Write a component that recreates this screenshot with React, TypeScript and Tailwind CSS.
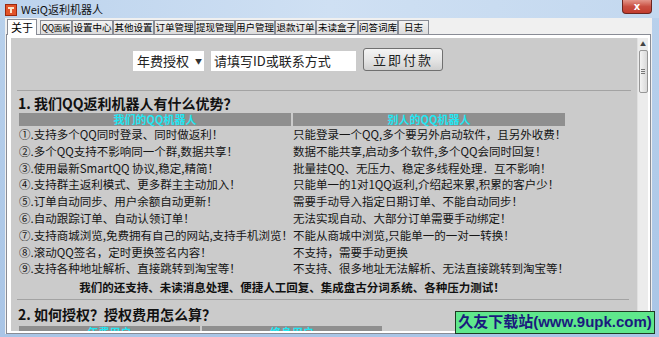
import React from "react";

const TABS = [
  { label: "关于", w: 30 },
  { label: "QQ面板", w: 32 },
  { label: "设置中心", w: 41 },
  { label: "其他设置", w: 41 },
  { label: "订单管理", w: 41 },
  { label: "提现管理", w: 40 },
  { label: "用户管理", w: 40 },
  { label: "退款订单", w: 41 },
  { label: "未读盒子", w: 42 },
  { label: "问答词库", w: 40 },
  { label: "日志", w: 31 },
];

const ROWS: [string, string][] = [
  ["①.支持多个QQ同时登录、同时做返利！", "只能登录一个QQ,多个要另外启动软件，且另外收费！"],
  ["②.多个QQ支持不影响同一个群,数据共享！", "数据不能共享,启动多个软件,多个QQ会同时回复！"],
  ["③.使用最新SmartQQ 协议,稳定,精简！", "批量挂QQ、无压力、稳定多线程处理．互不影响！"],
  ["④.支持群主返利模式、更多群主主动加入！", "只能单一的1对1QQ返利,介绍起来累,积累的客户少！"],
  ["⑤.订单自动同步、用户余额自动更新！", "需要手动导入指定日期订单、不能自动同步！"],
  ["⑥.自动跟踪订单、自动认领订单！", "无法实现自动、大部分订单需要手动绑定！"],
  ["⑦.支持商城浏览,免费拥有自己的网站,支持手机浏览！", "不能从商城中浏览,只能单一的一对一转换！"],
  ["⑧.滚动QQ签名，定时更换签名内容！", "不支持，需要手动更换"],
  ["⑨.支持各种地址解析、直接跳转到淘宝等！", "不支持、很多地址无法解析、无法直接跳转到淘宝等！"],
];

function AppIcon() {
  return (
    <svg width="12" height="12" viewBox="0 0 12 12">
      <rect x="0.5" y="0.5" width="11" height="11" fill="#e2542a" stroke="#9c2a10" />
      <path d="M3 3h6v2H7v4H5V5H3z" fill="#fbe3c8" />
    </svg>
  );
}

export default function App() {
  return (
    <div className="relative w-[659px] h-[337px] overflow-hidden bg-gradient-to-b from-[#b9d1ec] to-[#a9c5e6] font-['Noto_Sans_CJK_SC',sans-serif] text-black">
      {/* Title bar */}
      <div className="h-[18px] flex items-center bg-gradient-to-r from-[#bcd3ed] via-[#cfe0f3] to-[#c3d8ef]">
        <div className="ml-[5px] mt-[2px]">
          <AppIcon />
        </div>
        <span className="ml-[4px] text-[11px] leading-[18px] text-[#111]">WeiQ返利机器人</span>
        <div className="ml-auto mr-[7px] self-start w-[30px] h-[14px] rounded-b-[4px] border border-t-0 border-[#6b2520] bg-gradient-to-b from-[#e3958a] via-[#c94f42] to-[#c23c2e] flex items-center justify-center">
          <span className="text-white text-[10px] font-bold leading-none font-['DejaVu_Sans',sans-serif]">x</span>
        </div>
      </div>

      {/* Client area */}
      <div className="ml-[5px] w-[647px] h-[316px] bg-[#f0f0f0] pt-[1px]">
        {/* Tabs */}
        <div className="relative z-10 flex items-end h-[15px] pl-[2px]">
          {TABS.map((t, i) =>
            i === 0 ? (
              <div
                key={t.label}
                style={{ width: t.w }}
                className="h-[16px] -mb-[1px] border border-b-0 border-[#898c95] bg-white text-[11px] leading-[14px] text-center whitespace-nowrap mr-[3px]"
              >
                {t.label}
              </div>
            ) : (
              <div
                key={t.label}
                style={{ width: t.w }}
                className={
                  "h-[14px] border border-b-0 border-[#898c95] bg-gradient-to-b from-[#f3f3f3] to-[#dcdcdc] leading-[13px] text-center whitespace-nowrap overflow-hidden " +
                  (t.label === "QQ面板" ? "text-[8.5px] tracking-[-0.3px]" : "text-[9.5px]")
                }
              >
                {t.label}
              </div>
            )
          )}
        </div>

        {/* Panel */}
        <div className="ml-[1px] w-[645px] h-[300px] border border-[#898c95] bg-white flex pl-[4px] pr-[2px] pt-[3px] pb-[2px]">
          <div className="w-[626px] h-[293px] bg-[#cbcbcb] overflow-hidden">
            {/* Controls */}
            <div className="mt-[10px] pl-[122px] flex items-start">
              <div className="mt-[3px] w-[71px] h-[20px] bg-white flex items-center pl-[4px] text-[13px] leading-[20px] text-[#222]">
                年费授权
                <span className="ml-[6px] text-[7px] text-[#333]">▼</span>
              </div>
              <div className="ml-[7px] mt-[3px] w-[145px] h-[20px] bg-white pl-[3px] text-[13px] leading-[20px] text-[#222] whitespace-nowrap">
                请填写ID或联系方式
              </div>
              <div className="ml-[7px] w-[80px] h-[23px] rounded-[3px] border border-[#707070] bg-gradient-to-b from-[#f4f4f4] via-[#e6e6e6] to-[#cfcfcf] text-[13px] leading-[21px] text-center tracking-[2px] text-[#222]">
                立即付款
              </div>
            </div>

            <div className="mt-[19px] ml-[6px] w-[614px] h-px bg-[#a3a3a3]" />

            <div className="mt-[4px] ml-[7px] h-[16px] leading-[16px] text-[14px] font-bold text-[#111] whitespace-nowrap">
              1. 我们QQ返利机器人有什么优势？
            </div>

            {/* Table */}
            <div className="mt-[2px] ml-[8px] w-[546px]">
              <div className="flex gap-[2px] h-[13px]">
                <div className="w-[272px] bg-[#8f8f8f] text-center text-[11px] font-bold leading-[13px] text-[#22e6f2]">我们的QQ机器人</div>
                <div className="w-[272px] bg-[#8f8f8f] text-center text-[11px] font-bold leading-[13px] text-[#22e6f2]">别人的QQ机器人</div>
              </div>
              <div className="grid grid-cols-[272px_272px] gap-x-[2px]">
                {ROWS.map(([a, b]) => (
                  <React.Fragment key={a}>
                    <div className="h-[16.8px] leading-[16.8px] text-[11.5px] whitespace-nowrap text-[#151515]">{a}</div>
                    <div className="h-[16.8px] leading-[16.8px] text-[11.5px] whitespace-nowrap text-[#151515]">{b}</div>
                  </React.Fragment>
                ))}
              </div>
              <div className="mt-[1px] h-[18px] leading-[18px] text-center text-[11.5px] font-bold whitespace-nowrap text-[#111]">
                我们的还支持、未读消息处理、便捷人工回复、集成盘古分词系统、各种压力测试！
              </div>
            </div>

            <div className="mt-[3px] ml-[6px] w-[612px] h-px bg-[#a3a3a3]" />

            <div className="mt-[6px] ml-[7px] h-[16px] leading-[16px] text-[14px] font-bold text-[#111] whitespace-nowrap">
              2. 如何授权？授权费用怎么算？
            </div>

            <div className="mt-[4px] ml-[8px] flex gap-[2px] h-[13px]">
              <div className="w-[181px] bg-[#8f8f8f] text-center text-[11px] font-bold leading-[13px] text-[#22e6f2]">年费用户</div>
              <div className="w-[180px] bg-[#8f8f8f] text-center text-[11px] font-bold leading-[13px] text-[#22e6f2]">终身用户</div>
            </div>
          </div>

          {/* Scrollbar */}
          <div className="w-[11px] h-[293px] bg-[#ececec] border-l border-[#e0e0e0] flex flex-col items-center">
            <div className="h-[12px] flex items-center justify-center text-[6px] text-[#444] leading-none">▲</div>
            <div className="w-[9px] h-[43px] rounded-[2px] border border-[#979797] bg-gradient-to-r from-[#f4f4f4] to-[#d9d9d9] flex flex-col items-center justify-center gap-[1px]">
              <div className="w-[4px] h-px bg-[#777]" />
              <div className="w-[4px] h-px bg-[#777]" />
              <div className="w-[4px] h-px bg-[#777]" />
            </div>
          </div>
        </div>
      </div>

      {/* Watermark overlay */}
      <div className="absolute left-[455px] top-[311px] w-[200px] h-[23px] bg-[#5fe88c] border border-[#1d3a22] flex items-center justify-center text-[15px] font-bold text-[#1a1a7e] whitespace-nowrap font-['Liberation_Sans','Noto_Sans_CJK_SC',sans-serif]">
        久友下载站(www.9upk.com)
      </div>
    </div>
  );
}
